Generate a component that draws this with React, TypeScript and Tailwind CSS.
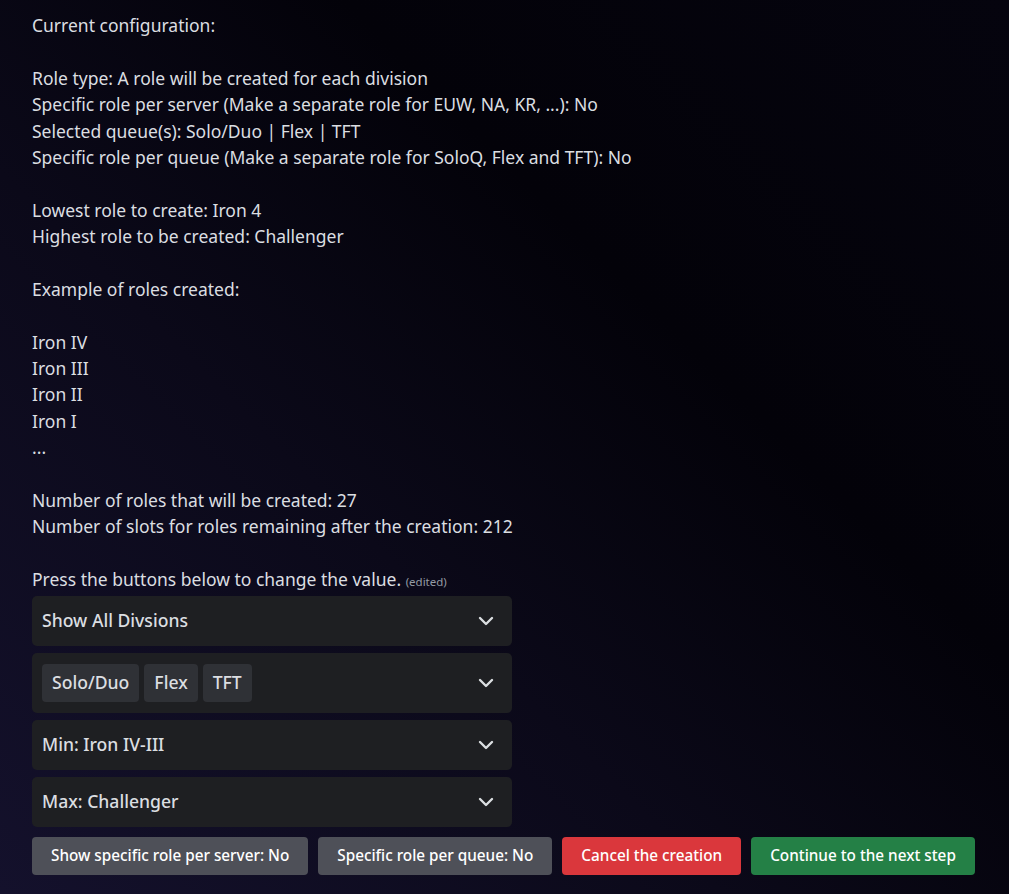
import React from 'react'

const lines = [
  'Current configuration:',
  '',
  'Role type: A role will be created for each division',
  'Specific role per server (Make a separate role for EUW, NA, KR, ...): No',
  'Selected queue(s): Solo/Duo | Flex | TFT',
  'Specific role per queue (Make a separate role for SoloQ, Flex and TFT): No',
  '',
  'Lowest role to create: Iron 4',
  'Highest role to be created: Challenger',
  '',
  'Example of roles created:',
  '',
  'Iron IV',
  'Iron III',
  'Iron II',
  'Iron I',
  '...',
  '',
  'Number of roles that will be created: 27',
  'Number of slots for roles remaining after the creation: 212',
  '',
]

function Chevron() {
  return (
    <svg width="16" height="10" viewBox="0 0 16 10" className="shrink-0">
      <polyline points="2,2 8,8 14,2" fill="none" stroke="#dbdee1" strokeWidth="2.4" strokeLinecap="round" strokeLinejoin="round" />
    </svg>
  )
}

function Select({ children, tall }: { children: React.ReactNode; tall?: boolean }) {
  return (
    <div
      className={`flex items-center justify-between rounded-[5px] bg-[#1e1f22] pl-[10px] pr-[18px] ${tall ? 'h-[60px]' : 'h-[50px]'}`}
    >
      <div className="flex items-center gap-[5px] text-[17.6px] font-medium text-[#dbdee1]">{children}</div>
      <Chevron />
    </div>
  )
}

function Chip({ label }: { label: string }) {
  return (
    <span className="flex h-[38px] items-center rounded-[4px] bg-[#2f3136] px-[10px] text-[17.6px] font-medium text-[#dbdee1]">
      {label}
    </span>
  )
}

function Button({ label, color }: { label: string; color: string }) {
  return (
    <button
      className={`h-[38px] whitespace-nowrap rounded-[4px] px-[19px] text-[15.3px] font-medium text-white ${color}`}
    >
      {label}
    </button>
  )
}

export default function App() {
  return (
    <div
      className="min-h-[894px] w-full bg-[linear-gradient(45deg,#14112c_0%,#0b0919_38%,#030209_65%,#05040e_100%)] pt-[12px] pl-[32px]"
      style={{ fontFamily: '"Noto Sans", sans-serif' }}
    >
      <div className="text-[17.5px] leading-[26.4px] text-[#dbdee1]">
        {lines.map((l, i) => (
          <div key={i} className="h-[26.4px] whitespace-pre">
            {l}
          </div>
        ))}
        <div className="h-[26.4px] whitespace-pre">
          Press the buttons below to change the value.{' '}
          <span className="text-[11.5px] text-[#949ba4]">(edited)</span>
        </div>
      </div>

      <div className="mt-[3px] flex w-[480px] flex-col gap-[7px]">
        <Select>Show All Divsions</Select>
        <Select tall>
          <Chip label="Solo/Duo" />
          <Chip label="Flex" />
          <Chip label="TFT" />
        </Select>
        <Select>Min: Iron IV-III</Select>
        <Select>Max: Challenger</Select>
      </div>

      <div className="mt-[10px] flex gap-[10px]">
        <Button label="Show specific role per server: No" color="bg-[#4e5058]" />
        <Button label="Specific role per queue: No" color="bg-[#4e5058]" />
        <Button label="Cancel the creation" color="bg-[#da373c]" />
        <Button label="Continue to the next step" color="bg-[#248046]" />
      </div>
    </div>
  )
}
